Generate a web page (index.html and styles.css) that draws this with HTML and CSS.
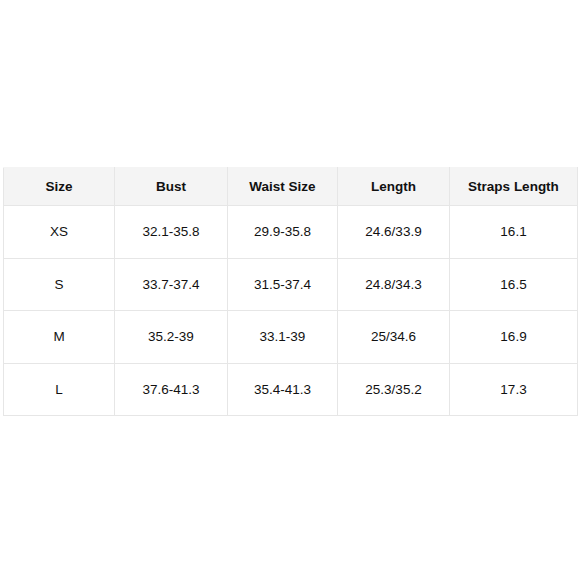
FILE: index.html
```html
<!DOCTYPE html>
<html>
<head>
<meta charset="utf-8">
<link rel="stylesheet" href="styles.css">
</head>
<body>
<div class="page">
<table class="sizes">
<colgroup>
<col class="c1"><col class="c2"><col class="c3"><col class="c4"><col class="c5">
</colgroup>
<thead>
<tr><th>Size</th><th>Bust</th><th>Waist Size</th><th>Length</th><th>Straps Length</th></tr>
</thead>
<tbody>
<tr><td>XS</td><td>32.1-35.8</td><td>29.9-35.8</td><td>24.6/33.9</td><td>16.1</td></tr>
<tr><td>S</td><td>33.7-37.4</td><td>31.5-37.4</td><td>24.8/34.3</td><td>16.5</td></tr>
<tr><td>M</td><td>35.2-39</td><td>33.1-39</td><td>25/34.6</td><td>16.9</td></tr>
<tr><td>L</td><td>37.6-41.3</td><td>35.4-41.3</td><td>25.3/35.2</td><td>17.3</td></tr>
</tbody>
</table>
</div>
</body>
</html>
```
FILE: styles.css
```css
html, body {
  margin: 0;
  padding: 0;
  background: #fff;
}
.page {
  width: 580px;
  height: 580px;
  padding: 167px 0 0 3px;
  box-sizing: border-box;
  font-family: "Liberation Sans", Arial, sans-serif;
  color: #111;
}
.sizes {
  border-collapse: collapse;
  table-layout: fixed;
  width: 574px;
}
.c1 { width: 111px; }
.c2 { width: 113px; }
.c3 { width: 110px; }
.c4 { width: 112px; }
.c5 { width: 128px; }
.sizes th, .sizes td {
  border: 1px solid #e6e6e6;
  text-align: center;
  padding: 0;
  font-size: 13.5px;
}
.sizes thead th {
  border-top-color: #f4f4f4;
}
.sizes th {
  background: #f4f4f4;
  height: 37px;
  font-weight: bold;
}
.sizes td {
  height: 51.5px;
}
```
